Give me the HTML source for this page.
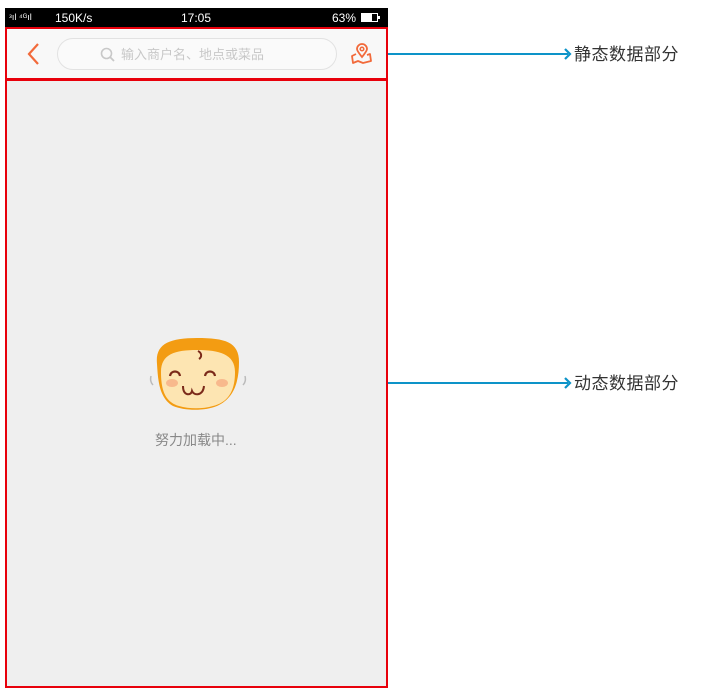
<!DOCTYPE html>
<html><head><meta charset="utf-8"><style>
*{margin:0;padding:0;box-sizing:border-box}
body{width:707px;height:692px;background:#fff;position:relative;overflow:hidden;font-family:"Liberation Sans","Noto Sans CJK SC",sans-serif}
.status{position:absolute;left:5px;top:8px;width:383px;height:20px;background:#000;color:#fff;font-size:12px}
.status span{position:absolute;top:3px}
.head{position:absolute;left:5px;top:27px;width:383px;height:53px;background:#f8f8f8;border:2px solid #e8000b}
.body{position:absolute;left:5px;top:79px;width:383px;height:609px;background:#efefef;border:2px solid #e8000b}
.search{position:absolute;left:50px;top:9px;width:280px;height:32px;border:1px solid #e2e2e2;border-radius:16px;background:#fafafa;color:#c8c8c8;font-size:13px}
.lbl{position:absolute;font-size:17px;color:#333;left:574px;letter-spacing:0.5px}
.arrow{position:absolute;left:388px;height:2px;background:#0d93c8;width:180px}
</style></head><body>
<div class="status">
<span style="left:4px;font-size:9px;top:4px">ᵌıl ⁴ᴳıl</span>
<span style="left:50px">150K/s</span>
<span style="left:176px">17:05</span>
<span style="left:327px">63%</span>
<div style="position:absolute;left:356px;top:5px;width:17px;height:9px;border:1px solid #fff"><div style="width:10px;height:7px;background:#fff"></div></div>
<div style="position:absolute;left:373px;top:8px;width:2px;height:3px;background:#fff"></div>
</div>
<div class="head">
<svg style="position:absolute;left:18px;top:13px" width="16" height="24"><path d="M13 2 L4 12 L13 22" stroke="#f26a3b" stroke-width="2.2" fill="none"/></svg>
<div class="search">
<svg style="position:absolute;left:42px;top:8px" width="16" height="16"><circle cx="6.5" cy="6.5" r="5" stroke="#c8c8c8" stroke-width="1.6" fill="none"/><path d="M10 10 L14 14" stroke="#c8c8c8" stroke-width="1.8"/></svg>
<span style="position:absolute;left:63px;top:5px">输入商户名、地点或菜品</span>
</div>
<svg style="position:absolute;left:343px;top:13px" width="24" height="24"><path d="M12 15 C9 11 7 9 7 7 A5 5 0 0 1 17 7 C17 9 15 11 12 15Z" stroke="#f26a3b" stroke-width="1.8" fill="none"/><circle cx="12" cy="7" r="1.8" stroke="#f26a3b" stroke-width="1.5" fill="none"/><path d="M6 12 L2 14 L3 21 L8 19 L13 21 L21 19 L20 12 L17 13" stroke="#f26a3b" stroke-width="1.8" fill="none" stroke-linejoin="round"/></svg>
</div>
<div class="body">
<svg style="position:absolute;left:140px;top:255px" width="104" height="80">
<path d="M10 28 C8 8 22 2 50 2 C78 2 92 6 92 26 C92 44 88 62 70 70 C58 75 38 75 26 70 C12 62 11 44 10 28Z" fill="#f39c12"/>
<path d="M14 36 C14 18 28 14 50 14 C72 14 88 18 88 36 C88 54 82 66 66 70 C56 73 42 73 32 70 C18 66 14 54 14 36Z" fill="#fde5b2"/>
<path d="M51 15 C55 17 55 21 52 23" stroke="#7b2a1a" stroke-width="2" fill="none"/>
<path d="M23 40 C24 34 32 34 33 40 M58 40 C59 34 67 34 68 40" stroke="#7b2a1a" stroke-width="2.2" fill="none"/>
<ellipse cx="25" cy="47" rx="6" ry="4" fill="#f8b98d"/><ellipse cx="75" cy="47" rx="6" ry="4" fill="#f8b98d"/>
<path d="M36 50 C36 60 44 60 45 55 C47 60 56 60 57 50" stroke="#7b2a1a" stroke-width="2" fill="none"/>
<path d="M4 40 C3 44 4 47 6 49 M98 40 C99 44 98 47 96 49" stroke="#bbb" stroke-width="1.5" fill="none"/>
</svg>
<div style="position:absolute;left:148px;top:349px;font-size:14px;color:#888">努力加载中...</div>
</div>
<div class="arrow" style="top:53px"></div>
<svg style="position:absolute;left:563px;top:48px" width="10" height="12"><path d="M2 1 L7 6 L2 11" stroke="#0d93c8" stroke-width="2.2" fill="none"/></svg>
<div class="lbl" style="top:40px">静态数据部分</div>
<div class="arrow" style="top:382px"></div>
<svg style="position:absolute;left:563px;top:377px" width="10" height="12"><path d="M2 1 L7 6 L2 11" stroke="#0d93c8" stroke-width="2.2" fill="none"/></svg>
<div class="lbl" style="top:369px">动态数据部分</div>
</body></html>
